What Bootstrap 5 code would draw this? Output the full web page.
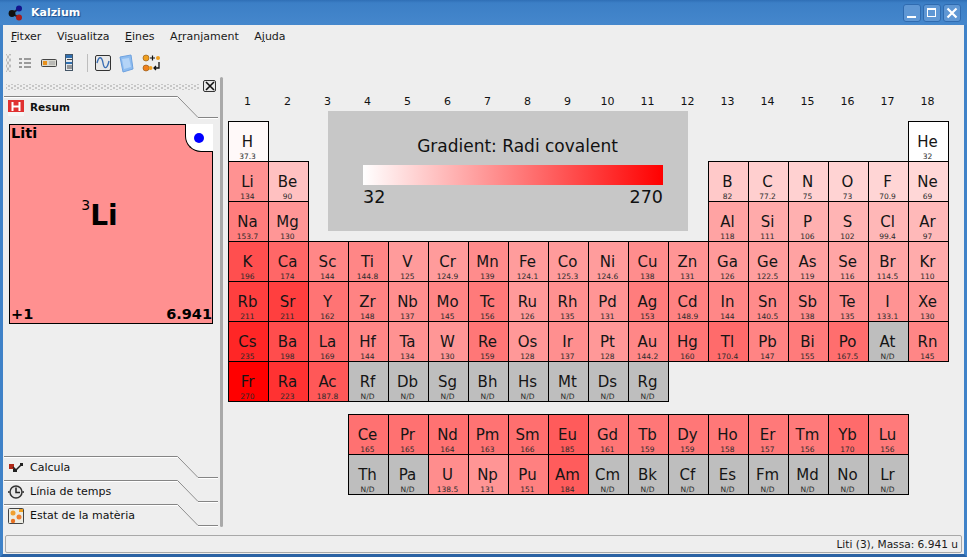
<!DOCTYPE html>
<html lang="ca">
<head>
    <meta charset="UTF-8">
    <meta name="viewport" content="width=device-width, initial-scale=1.0">
    <title>Kalzium</title>
    <link href="https://cdn.jsdelivr.net/npm/bootstrap@5.3.0/dist/css/bootstrap.min.css" rel="stylesheet">
    <style>
        html, body {
            height: 100%;
            overflow: hidden;
        }
        body {
            font-family: "DejaVu Sans", sans-serif;
            font-size: 11px;
            line-height: 1.2;
            color: #111;
            background-color: #eeeeee;
        }
        .app-window {
            height: 557px;
            border-left: 3px solid #3f82c8;
            border-right: 3px solid #3f82c8;
            border-bottom: 3px solid #2a62a4;
            background-color: #eeeeee;
        }
        .title-bar {
            height: 25px;
            margin: 0 -3px;
            padding: 0 6px 0 6px;
            background: linear-gradient(#2f6fb6 0, #3c7fc6 3px, #4587cc 100%);
            color: #fff;
            font-weight: 700;
            font-size: 11px;
        }
        .title-text {
            margin-left: 7px;
            text-shadow: 1px 1px 1px #1d4f8c;
        }
        .win-btn {
            width: 18px;
            height: 18px;
            border: 1px solid #2f6bb0;
            border-radius: 3px;
            background-color: #5f97d4;
        }
        .win-btns {
            gap: 2px;
        }
        .menu-bar {
            height: 24px;
            padding-left: 8px;
            gap: 15.5px;
            color: #1a1a1a;
        }
        .toolbar-row {
            height: 28px;
            padding-left: 3px;
        }
        .grip-v {
            width: 5px;
            height: 18px;
            margin-right: 6px;
            background-image: radial-gradient(#bcbcbc 1px, transparent 1.2px), radial-gradient(#bcbcbc 1px, transparent 1.2px);
            background-size: 4px 6px;
            background-position: 0 0, 2px 3px;
        }
        .tool-sep {
            width: 1px;
            height: 18px;
            margin: 0 6px 0 9px;
            background-color: #bdbdbd;
        }
        .work-area {
            min-height: 0;
        }
        .side-panel {
            width: 215px;
            padding-left: 1px;
        }
        .dock-head {
            height: 19px;
            padding: 3px 2px 0 2px;
        }
        .grip-h {
            height: 6px;
            background-image: radial-gradient(#c6c6c6 1px, transparent 1.2px), radial-gradient(#c6c6c6 1px, transparent 1.2px);
            background-size: 6px 4px;
            background-position: 0 0, 3px 2px;
        }
        .dock-close {
            width: 13px;
            height: 12px;
            margin-left: 4px;
            border: 1px solid #333;
            border-radius: 2px;
            background-color: #e8e8e8;
        }
        .tool-tab {
            height: 24px;
            padding: 0 0 1px 4px;
            gap: 6px;
        }
        .tab-lines {
            top: 0;
            left: 0;
        }
        .tab-open {
            height: 28px;
            padding-bottom: 5px;
            font-weight: 700;
            font-size: 10.5px;
        }
        .tab-pic {
            width: 16px;
            height: 16px;
            flex: none;
        }
        .element-wrap {
            padding: 0 5px;
        }
        .element-big {
            height: 200px;
            padding: 0 0 0 1px;
            background-color: #ff9090;
            border: 1px solid #000;
            font-weight: 700;
            font-size: 14.5px;
            color: #000;
        }
        .block-notch {
            top: -1px;
            right: -1px;
            width: 28px;
            height: 28px;
            padding-right: 1px;
            background-color: #fff;
            border-left: 1px solid #000;
            border-bottom: 1px solid #000;
            border-bottom-left-radius: 16px;
        }
        .block-dot {
            width: 10px;
            height: 10px;
            border-radius: 50%;
            background-color: #0000ff;
        }
        .big-center {
            padding: 0 24px 21px 0;
        }
        .big-symbol {
            font-size: 28px;
            line-height: 1;
        }
        .big-number {
            font-size: 14px;
            font-weight: 400;
            vertical-align: 15px;
        }
        .splitter {
            width: 3px;
            margin: 0 5px 1px 2px;
            background-color: #a9a9a9;
            border-radius: 2px;
        }
        .pse-grid {
            display: grid;
            grid-template-columns: repeat(18, 40px);
            grid-template-rows: 44px repeat(7, 40px) 13px repeat(2, 40px);
        }
        .group-num {
            padding-top: 18px;
            margin-left: -1px;
            text-align: center;
            font-size: 11px;
        }
        .elem-cell {
            margin: 0 -1px -1px 0;
            padding-right: 2px;
            border: 1px solid #000;
            text-align: center;
            color: #151515;
        }
        .elem-symbol {
            padding-top: 11px;
            font-size: 15px;
            line-height: 18px;
        }
        .elem-value {
            margin-top: 1px;
            font-size: 7.5px;
            line-height: 9px;
            color: #2a2a2a;
        }
        .grad-legend {
            grid-column: 3 / 13;
            grid-row: 2 / 5;
            margin: -10px 20px 10px 20px;
            background-color: #c7c7c7;
            padding: 24px 25px 0 35px;
            color: #111;
        }
        .grad-title {
            padding-left: 9px;
            font-size: 17px;
            line-height: 22px;
        }
        .grad-bar {
            height: 20px;
            margin-top: 8px;
            background: linear-gradient(to right, #ffffff, #ff0000);
        }
        .grad-labels {
            padding-top: 2px;
            font-size: 17.5px;
            line-height: 20px;
        }
        .status-box {
            height: 18px;
            margin: 7px 2px 1px 2px;
            padding-right: 3px;
            border: 1px solid #a8a8a8;
            border-radius: 2px;
            font-size: 10.6px;
            color: #1a1a1a;
        }
    </style>
</head>
<body>
    <div class="app-window d-flex flex-column">

        <div class="title-bar d-flex align-items-center">
            <svg width="18" height="16" viewBox="0 0 18 16">
                <path d="M6 8.500 L13 3.500 M6 8.500 L13 12.500" stroke="#222" stroke-width="2"/>
                <circle cx="6" cy="8.500" r="3.400" fill="#111"/>
                <circle cx="13" cy="3.500" r="3" fill="#14148c"/>
                <circle cx="13" cy="12.500" r="3" fill="#a81c1c"/>
            </svg>
            <span class="title-text">Kalzium</span>
            <div class="win-btns ms-auto d-flex">
                <div class="win-btn d-flex align-items-center justify-content-center">
                    <svg width="14" height="14" viewBox="0 0 14 14"><rect x="2" y="10" width="9" height="2" fill="#fff"/></svg>
                </div>
                <div class="win-btn d-flex align-items-center justify-content-center">
                    <svg width="14" height="14" viewBox="0 0 14 14"><rect x="2.500" y="2.500" width="8" height="8" fill="none" stroke="#fff"/><rect x="2" y="2" width="9" height="2" fill="#fff"/></svg>
                </div>
                <div class="win-btn d-flex align-items-center justify-content-center">
                    <svg width="14" height="14" viewBox="0 0 14 14"><path d="M2.500 2.500 L11.500 11.500 M11.500 2.500 L2.500 11.500" stroke="#fff" stroke-width="2.200"/></svg>
                </div>
            </div>
        </div>

        <div class="menu-bar d-flex align-items-center">
            <span><u>F</u>itxer</span>
            <span>Vi<u>s</u>ualitza</span>
            <span><u>E</u>ines</span>
            <span>A<u>r</u>ranjament</span>
            <span>A<u>j</u>uda</span>
        </div>

        <div class="toolbar-row d-flex align-items-center">
            <div class="grip-v"></div>
            <svg width="20" height="22" viewBox="0 0 20 22">
                <path d="M2 7h3M7 7h7M2 11h3M7 11h7M2 15h3M7 15h7" stroke="#9a9a9a" stroke-width="2"/>
            </svg>
            <svg width="23" height="22" viewBox="0 0 23 22">
                <rect x="4.500" y="7.500" width="15" height="7" rx="1" fill="#d8d8d0" stroke="#444"/>
                <rect x="6" y="9" width="4" height="4" fill="#e8901c"/>
                <path d="M12 10h6M12 12h6" stroke="#999"/>
            </svg>
            <svg width="18" height="22" viewBox="0 0 18 22">
                <rect x="5.500" y="2.500" width="7" height="16" fill="#e4e8ec" stroke="#456"/>
                <rect x="6" y="3" width="6" height="3" fill="#2f6fb0"/>
                <rect x="6" y="10" width="6" height="2" fill="#2f6fb0"/>
                <path d="M7 7.500h5M7 14h5M7 16h5" stroke="#444"/>
            </svg>
            <div class="tool-sep"></div>
            <svg width="22" height="22" viewBox="0 0 22 22">
                <rect x="1.500" y="3.500" width="15" height="15" rx="1.500" fill="#e8e8e8" stroke="#333"/>
                <path d="M3 11 C5 3 8 5 9 11 S13 18 15 9" fill="none" stroke="#3b6fb5" stroke-width="1.400"/>
            </svg>
            <svg width="23" height="22" viewBox="0 0 23 22">
                <path d="M4 5 L15 3 L17 17 L7 20 Z" fill="#8dbcf0" stroke="#6ea2e0"/>
                <path d="M6 7 L13 6 L15 15 L8 17 Z" fill="#b4d4f7"/>
            </svg>
            <svg width="26" height="22" viewBox="0 0 26 22">
                <circle cx="7" cy="6" r="3" fill="#f0a020" stroke="#885010" stroke-width=".6"/>
                <path d="M11 6h5M13.500 3.500v5" stroke="#111" stroke-width="1.200"/>
                <circle cx="19" cy="6" r="2" fill="#f0a020"/>
                <circle cx="7" cy="16" r="3" fill="#f0801c" stroke="#885010" stroke-width=".6"/>
                <circle cx="11.500" cy="16" r="2" fill="#f0a020"/>
                <path d="M20 10v6h-5M17 14l-2 2 2 2" fill="none" stroke="#111" stroke-width="1.300"/>
            </svg>
        </div>

        <div class="work-area d-flex flex-grow-1">
            <div class="side-panel d-flex flex-column">
                <div class="dock-head d-flex">
                    <div class="grip-h flex-grow-1 mt-1"></div>
                    <div class="dock-close d-flex align-items-center justify-content-center">
                        <svg width="10" height="10" viewBox="0 0 10 10"><path d="M1 1 L9 9 M9 1 L1 9" stroke="#111" stroke-width="1.600"/></svg>
                    </div>
                </div>

                <div class="tool-tab tab-open d-flex align-items-center position-relative">
                    <svg class="tab-lines position-absolute" width="214" height="28"><path d="M0 1.500H174L194.500 22.500H214" fill="none" stroke="#fff"/><path d="M0 .5H173.500L194 21.500H214" fill="none" stroke="#858585"/></svg>
                    <svg class="tab-pic" viewBox="0 0 16 16">
                        <rect width="16" height="16" fill="#e03030"/>
                        <rect y="12" width="16" height="4" fill="#f6f6f6"/>
                        <path d="M4.500 2v9M11.500 2v9M4.500 6.500h7" stroke="#fff" stroke-width="2"/>
                    </svg>
                    <span>Resum</span>
                </div>

                <div class="element-wrap">
                    <div class="element-big d-flex flex-column position-relative">
                        <div class="block-notch position-absolute d-flex align-items-center justify-content-center">
                            <div class="block-dot"></div>
                        </div>
                        <div>Liti</div>
                        <div class="big-center flex-grow-1 d-flex align-items-center justify-content-center">
                            <div class="big-symbol"><span class="big-number">3</span>Li</div>
                        </div>
                        <div class="d-flex justify-content-between"><span>+1</span><span>6.941</span></div>
                    </div>
                </div>

                <div class="flex-grow-1"></div>

                <div class="tool-tab d-flex align-items-center position-relative">
                    <svg class="tab-lines position-absolute" width="214" height="24"><path d="M0 1.500H174L194.500 22.500H214" fill="none" stroke="#fff"/><path d="M0 .5H173.500L194 21.500H214" fill="none" stroke="#858585"/></svg>
                    <svg class="tab-pic" viewBox="0 0 16 16">
                        <rect x="1" y="4" width="5" height="5" fill="#b02818"/>
                        <rect x="12" y="3" width="3" height="3" fill="#222"/>
                        <rect x="5" y="9" width="4" height="3" fill="#222"/>
                        <path d="M5 7 L8 10 L13 5" fill="none" stroke="#222" stroke-width="1.500"/>
                    </svg>
                    <span>Calcula</span>
                </div>
                <div class="tool-tab d-flex align-items-center position-relative">
                    <svg class="tab-lines position-absolute" width="214" height="24"><path d="M0 1.500H174L194.500 22.500H214" fill="none" stroke="#fff"/><path d="M0 .5H173.500L194 21.500H214" fill="none" stroke="#858585"/></svg>
                    <svg class="tab-pic" viewBox="0 0 16 16">
                        <circle cx="8" cy="8" r="6" fill="#e6e6e6" stroke="#333" stroke-width="1.500"/>
                        <path d="M8 3.500V8.500H12M0 8h1.500M14.500 8H16" fill="none" stroke="#222" stroke-width="1.500"/>
                    </svg>
                    <span>Línia de temps</span>
                </div>
                <div class="tool-tab d-flex align-items-center position-relative">
                    <svg class="tab-lines position-absolute" width="214" height="24"><path d="M0 1.500H174L194.500 22.500H214" fill="none" stroke="#fff"/><path d="M0 .5H173.500L194 21.500H214" fill="none" stroke="#858585"/></svg>
                    <svg class="tab-pic" viewBox="0 0 16 16">
                        <rect x=".5" y=".5" width="15" height="15" rx="1" fill="#ecece4" stroke="#444"/>
                        <rect x="11" y="1" width="4" height="3" fill="#f0a020"/>
                        <circle cx="5" cy="5" r="2.500" fill="#f0a030"/>
                        <circle cx="11" cy="9" r="2.500" fill="#f08030"/>
                        <circle cx="5" cy="13" r="2.200" fill="#e87020"/>
                    </svg>
                    <span>Estat de la matèria</span>
                </div>
            </div>

            <div class="splitter"></div>

            <div class="flex-grow-1">
                <div class="pse-grid" id="pseGrid">
                    <div class="grad-legend">
                        <div class="grad-title text-center">Gradient: Radi covalent</div>
                        <div class="grad-bar"></div>
                        <div class="grad-labels d-flex justify-content-between"><span>32</span><span>270</span></div>
                    </div>
                </div>
            </div>
        </div>

        <div class="status-box d-flex align-items-center justify-content-end">Liti (3), Massa: 6.941 u</div>
    </div>

    <script>
        // symbol, value, column, row (row 9/10 = lanthanides/actinides)
        var elements = [
            ['H','37.3',1,1],['He','32',18,1],
            ['Li','134',1,2],['Be','90',2,2],['B','82',13,2],['C','77.2',14,2],['N','75',15,2],['O','73',16,2],['F','70.9',17,2],['Ne','69',18,2],
            ['Na','153.7',1,3],['Mg','130',2,3],['Al','118',13,3],['Si','111',14,3],['P','106',15,3],['S','102',16,3],['Cl','99.4',17,3],['Ar','97',18,3]
        ];
        function addRow(row, start, list) {
            list.split(' ').forEach(function(item, i) {
                var parts = item.split(':');
                elements.push([parts[0], parts[1], start + i, row]);
            });
        }
        addRow(4, 1, 'K:196 Ca:174 Sc:144 Ti:144.8 V:125 Cr:124.9 Mn:139 Fe:124.1 Co:125.3 Ni:124.6 Cu:138 Zn:131 Ga:126 Ge:122.5 As:119 Se:116 Br:114.5 Kr:110');
        addRow(5, 1, 'Rb:211 Sr:211 Y:162 Zr:148 Nb:137 Mo:145 Tc:156 Ru:126 Rh:135 Pd:131 Ag:153 Cd:148.9 In:144 Sn:140.5 Sb:138 Te:135 I:133.1 Xe:130');
        addRow(6, 1, 'Cs:235 Ba:198 La:169 Hf:144 Ta:134 W:130 Re:159 Os:128 Ir:137 Pt:128 Au:144.2 Hg:160 Tl:170.4 Pb:147 Bi:155 Po:167.5 At:N/D Rn:145');
        addRow(7, 1, 'Fr:270 Ra:223 Ac:187.8 Rf:N/D Db:N/D Sg:N/D Bh:N/D Hs:N/D Mt:N/D Ds:N/D Rg:N/D');
        addRow(9, 4, 'Ce:165 Pr:165 Nd:164 Pm:163 Sm:166 Eu:185 Gd:161 Tb:159 Dy:159 Ho:158 Er:157 Tm:156 Yb:170 Lu:156');
        addRow(10, 4, 'Th:N/D Pa:N/D U:138.5 Np:131 Pu:151 Am:184 Cm:N/D Bk:N/D Cf:N/D Es:N/D Fm:N/D Md:N/D No:N/D Lr:N/D');

        var grid = document.getElementById('pseGrid');

        for (var c = 1; c <= 18; c++) {
            var num = document.createElement('div');
            num.className = 'group-num';
            num.textContent = c;
            num.style.gridColumn = c;
            num.style.gridRow = 1;
            grid.appendChild(num);
        }

        elements.forEach(function(el) {
            var cell = document.createElement('div');
            cell.className = 'elem-cell';
            cell.style.gridColumn = el[2];
            cell.style.gridRow = el[3] + 1;
            if (el[1] === 'N/D') {
                cell.style.backgroundColor = '#bebebe';
            } else {
                var g = Math.round(255 * (1 - (parseFloat(el[1]) - 32) / 238));
                cell.style.backgroundColor = 'rgb(255,' + g + ',' + g + ')';
            }
            var sym = document.createElement('div');
            sym.className = 'elem-symbol';
            sym.textContent = el[0];
            var val = document.createElement('div');
            val.className = 'elem-value';
            val.textContent = el[1];
            cell.appendChild(sym);
            cell.appendChild(val);
            grid.appendChild(cell);
        });
    </script>
    <script src="https://cdn.jsdelivr.net/npm/bootstrap@5.3.0/dist/js/bootstrap.bundle.min.js"></script>
</body>
</html>
